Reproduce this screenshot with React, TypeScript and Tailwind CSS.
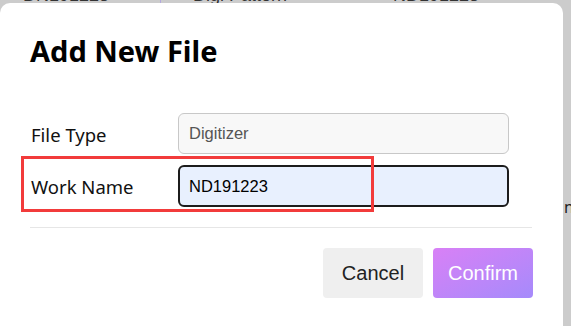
import React from "react";

export default function App() {
  return (
    <div className="relative w-[571px] h-[326px] overflow-hidden bg-[#cccccc]" style={{ fontFamily: '"Noto Sans", sans-serif' }}>
      {/* background table row, mostly hidden */}
      <div className="flex items-end h-[20px] -mt-[15px] text-[18px] text-[#333] leading-[20px]" style={{ fontFamily: '"Liberation Sans", Arial, sans-serif' }}>
        <div className="w-[160px] pl-[23px]">DN191223</div>
        <div className="w-[1px] h-full bg-[#b3a9dd]" />
        <div className="w-[232px] pl-[32px]">Digi Pattern</div>
        <div className="pl-0">ND191223</div>
      </div>
      <div className="absolute left-[564px] top-[195px] text-[16px] text-[#222]">ne</div>

      {/* modal */}
      <div className="absolute left-0 top-[3px] w-[563px] h-[340px] bg-white rounded-[10px] pt-[29px] pl-[30px] pr-[30px] flex flex-col">
        <h2 className="text-[29px] leading-[37px] font-bold text-black">Add New File</h2>
        <div className="mt-[44px] flex flex-col gap-[11px]">
          <div className="flex items-center">
            <label className="w-[148px] pl-[1px] pt-[3px] text-[18.5px] text-[#111]">File Type</label>
            <div
              className="w-[331px] h-[41px] rounded-[6px] border border-[#c8c8c8] bg-[#f8f8f8] flex items-center pl-[10px] text-[16.5px] text-[#555]"
              style={{ fontFamily: '"Liberation Sans", Arial, sans-serif' }}
            >
              Digitizer
            </div>
          </div>
          <div className="flex items-center">
            <label className="w-[148px] pl-[1px] pt-[2px] text-[18.5px] text-[#111]">Work Name</label>
            <div
              className="w-[331px] h-[42px] rounded-[6px] border-2 border-[#1c1c1c] bg-[#e8f0fe] flex items-center pl-[9px] text-[16.5px] text-black"
              style={{ fontFamily: '"Liberation Sans", Arial, sans-serif' }}
            >
              ND191223
            </div>
          </div>
        </div>
        <div className="mt-[20px] mr-[1px] h-[1px] bg-[#e6e6e6]" />
        <div className="mt-[20px] flex justify-end gap-[10px]" style={{ fontFamily: '"Liberation Sans", Arial, sans-serif' }}>
          <button className="w-[100px] h-[50px] rounded-[4px] bg-[#efefef] text-[20px] text-[#222]">Cancel</button>
          <button className="w-[100px] h-[50px] rounded-[4px] bg-gradient-to-br from-[#d880f6] to-[#a58afb] text-[20px] text-white">Confirm</button>
        </div>
      </div>

      {/* red annotation box */}
      <div className="absolute left-[21px] top-[156px] w-[353px] h-[56px] border-[3px] border-[#f23b3b]" />
    </div>
  );
}
